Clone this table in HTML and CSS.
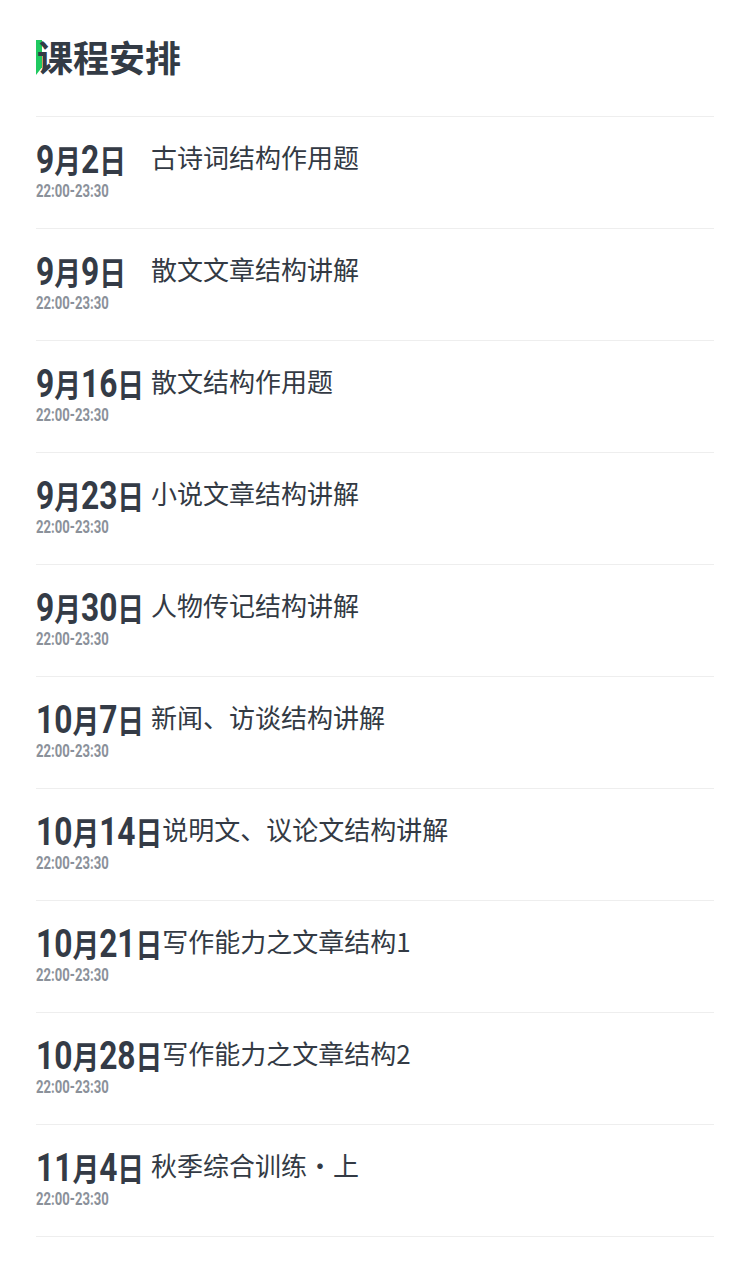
FILE: index.html
```html
<!DOCTYPE html>
<html lang="zh">
<head>
<meta charset="utf-8">
<title>课程安排</title>
<link rel="stylesheet" href="styles.css">
</head>
<body>
<section class="schedule">
  <header class="schedule-head">
    <span class="mark"></span>
    <h1 class="title">课程安排</h1>
  </header>
  <ul class="list">
    <li class="item"><div class="when"><div class="day"><span class="day-text">9<span class="cjk">月</span>2<span class="cjk">日</span></span></div><div class="time">22:00-23:30</div></div><div class="topic">古诗词结构作用题</div></li>
    <li class="item"><div class="when"><div class="day"><span class="day-text">9<span class="cjk">月</span>9<span class="cjk">日</span></span></div><div class="time">22:00-23:30</div></div><div class="topic">散文文章结构讲解</div></li>
    <li class="item"><div class="when"><div class="day"><span class="day-text">9<span class="cjk">月</span>16<span class="cjk">日</span></span></div><div class="time">22:00-23:30</div></div><div class="topic">散文结构作用题</div></li>
    <li class="item"><div class="when"><div class="day"><span class="day-text">9<span class="cjk">月</span>23<span class="cjk">日</span></span></div><div class="time">22:00-23:30</div></div><div class="topic">小说文章结构讲解</div></li>
    <li class="item"><div class="when"><div class="day"><span class="day-text">9<span class="cjk">月</span>30<span class="cjk">日</span></span></div><div class="time">22:00-23:30</div></div><div class="topic">人物传记结构讲解</div></li>
    <li class="item"><div class="when"><div class="day"><span class="day-text">10<span class="cjk">月</span>7<span class="cjk">日</span></span></div><div class="time">22:00-23:30</div></div><div class="topic">新闻、访谈结构讲解</div></li>
    <li class="item"><div class="when"><div class="day"><span class="day-text">10<span class="cjk">月</span>14<span class="cjk">日</span></span></div><div class="time">22:00-23:30</div></div><div class="topic">说明文、议论文结构讲解</div></li>
    <li class="item"><div class="when"><div class="day"><span class="day-text">10<span class="cjk">月</span>21<span class="cjk">日</span></span></div><div class="time">22:00-23:30</div></div><div class="topic">写作能力之文章结构1</div></li>
    <li class="item"><div class="when"><div class="day"><span class="day-text">10<span class="cjk">月</span>28<span class="cjk">日</span></span></div><div class="time">22:00-23:30</div></div><div class="topic">写作能力之文章结构2</div></li>
    <li class="item"><div class="when"><div class="day"><span class="day-text">11<span class="cjk">月</span>4<span class="cjk">日</span></span></div><div class="time">22:00-23:30</div></div><div class="topic">秋季综合训练・上</div></li>
  </ul>
</section>
<script src="script.js"></script>
</body>
</html>
```
FILE: styles.css
```css
html, body {
  margin: 0;
  padding: 0;
  background: #ffffff;
}
body {
  font-family: "Noto Sans CJK SC", "Noto Sans", sans-serif;
  color: #333a44;
}
.schedule {
  padding: 0 36px;
}
.schedule-head {
  position: relative;
  padding-top: 38px;
  padding-bottom: 42px;
  border-bottom: 1px solid #eeeeee;
}
.mark {
  position: absolute;
  left: 0;
  top: 40px;
  width: 6px;
  height: 35px;
  background: #1fc960;
  clip-path: polygon(0 0, 100% 0, 100% 78%, 0 100%);
}
.title {
  position: relative;
  margin: 0 0 0 1px;
  font-size: 36px;
  line-height: 36px;
  font-weight: 700;
  color: #333b45;
}
.list {
  list-style: none;
  margin: 0;
  padding: 0;
}
.item {
  display: flex;
  align-items: flex-start;
  padding-top: 23px;
  box-sizing: border-box;
  height: 112px;
  border-bottom: 1px solid #eeeeee;
}
.when {
  min-width: 115px;
}
.day {
  height: 38px;
  white-space: nowrap;
}
.day-text {
  display: inline-block;
  font-family: Roboto, "Noto Sans CJK SC", sans-serif;
  font-weight: 700;
  font-size: 38px;
  line-height: 38px;
  color: #343b46;
  transform: scaleX(0.835);
  transform-origin: left center;
}
.cjk {
  font-family: "Noto Sans CJK SC", sans-serif;
  font-size: 32px;
}
.time {
  margin-top: 3px;
  font-family: Roboto, sans-serif;
  font-weight: 700;
  font-size: 19px;
  line-height: 19px;
  color: #8b919a;
  white-space: nowrap;
  transform: scaleX(0.69);
  transform-origin: left center;
}
.topic {
  font-size: 26px;
  line-height: 34px;
  color: #333a44;
  white-space: nowrap;
}
```
FILE: script.js
```js
document.querySelectorAll('.day').forEach(function (day) {
  var text = day.querySelector('.day-text');
  day.style.width = text.getBoundingClientRect().width + 'px';
});
```
